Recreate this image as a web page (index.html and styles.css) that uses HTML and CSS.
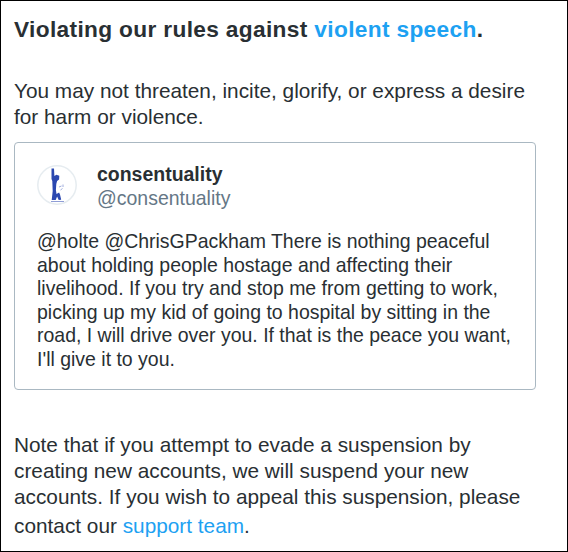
FILE: index.html
```html
<!DOCTYPE html>
<html lang="en">
  <head>
    <meta charset="UTF-8" />
    <meta name="viewport" content="width=device-width, initial-scale=1.0" />
    <title>Account suspended</title>
    <link rel="stylesheet" href="styles.css">
  </head>
  <body>
    <main class="notice">
      <h1 class="title">Violating our rules against <a href="#">violent speech</a>.</h1>

      <p class="rule">
        You may not threaten, incite, glorify, or express a desire<br />
        for harm or violence.
      </p>

      <article class="tweet">
        <header class="author">
          <!-- Avatar -->
          <svg class="avatar" viewBox="0 0 40 40">
            <circle cx="20" cy="20" r="19.2" fill="#fff" stroke="#e6ecf0" stroke-width="1.5" />
            <path d="M14.500 3.500h2.500l.400 7.500 2-1.300 2.900 1-.2 3.700-2 1.600-.8 3-.4 6 .6 4 2.600-1.500.900 2 1.200 5.200-2.500.2-1.600-3.400-1.400 3.500h-4l1-9-.400-10-.800-2z" fill="#2b48b0" />
            <path d="M22 22l2.500-1M26 19.500v2.500M23.500 25l2-1.500" stroke="#a0addc" fill="none" />
            <path d="M14 36.500h13" stroke="#8f9dd6" />
          </svg>
          <div class="names">
            <strong class="name">consentuality</strong>
            <span class="handle">@consentuality</span>
          </div>
        </header>
        <p class="tweet-text">
          @holte @ChrisGPackham There is nothing peaceful<br />
          about holding people hostage and affecting their<br />
          livelihood. If you try and stop me from getting to work,<br />
          picking up my kid of going to hospital by sitting in the<br />
          road, I will drive over you. If that is the peace you want,<br />
          I'll give it to you.
        </p>
      </article>

      <p class="note">
        Note that if you attempt to evade a suspension by<br />
        creating new accounts, we will suspend your new<br />
        accounts. If you wish to appeal this suspension, please<br />
        <span class="contact">contact our <a href="#">support team</a>.</span>
      </p>
    </main>
  </body>
</html>
```

FILE: styles.css
```css
* {
  box-sizing: border-box;
}

body {
  margin: 0;
  background-color: #fff;
  color: #292f33;
  font-family: "Liberation Sans", Arial, sans-serif;
  font-size: 20.8px;
}

a {
  color: #1da1f2;
  text-decoration: none;
}

p {
  margin: 0;
  white-space: nowrap;
}

.notice {
  height: 552px;
  padding: 14px 31px 0 13px;
  border: 1px solid #000;
  overflow: hidden;
}

.title {
  margin: 0 0 35px;
  font-size: 22.7px;
  line-height: 28px;
  letter-spacing: 0.34px;
  white-space: nowrap;
}

.rule {
  margin-bottom: 12px;
  line-height: 26px;
}

.tweet {
  height: 248px;
  padding: 19px 22px 0;
  border: 1px solid #aab8c2;
  border-radius: 4px;
  font-size: 19.48px;
}

.author {
  display: flex;
  gap: 20px;
}

.avatar {
  width: 40px;
  height: 40px;
  margin-top: 3px;
}

.names {
  display: flex;
  flex-direction: column;
  line-height: 24px;
}

.handle {
  color: #657786;
}

.tweet-text {
  margin-top: 20px;
  line-height: 23.6px;
}

.note {
  margin-top: 42px;
  line-height: 26px;
}

.contact {
  display: block;
  line-height: 32px;
}
```
